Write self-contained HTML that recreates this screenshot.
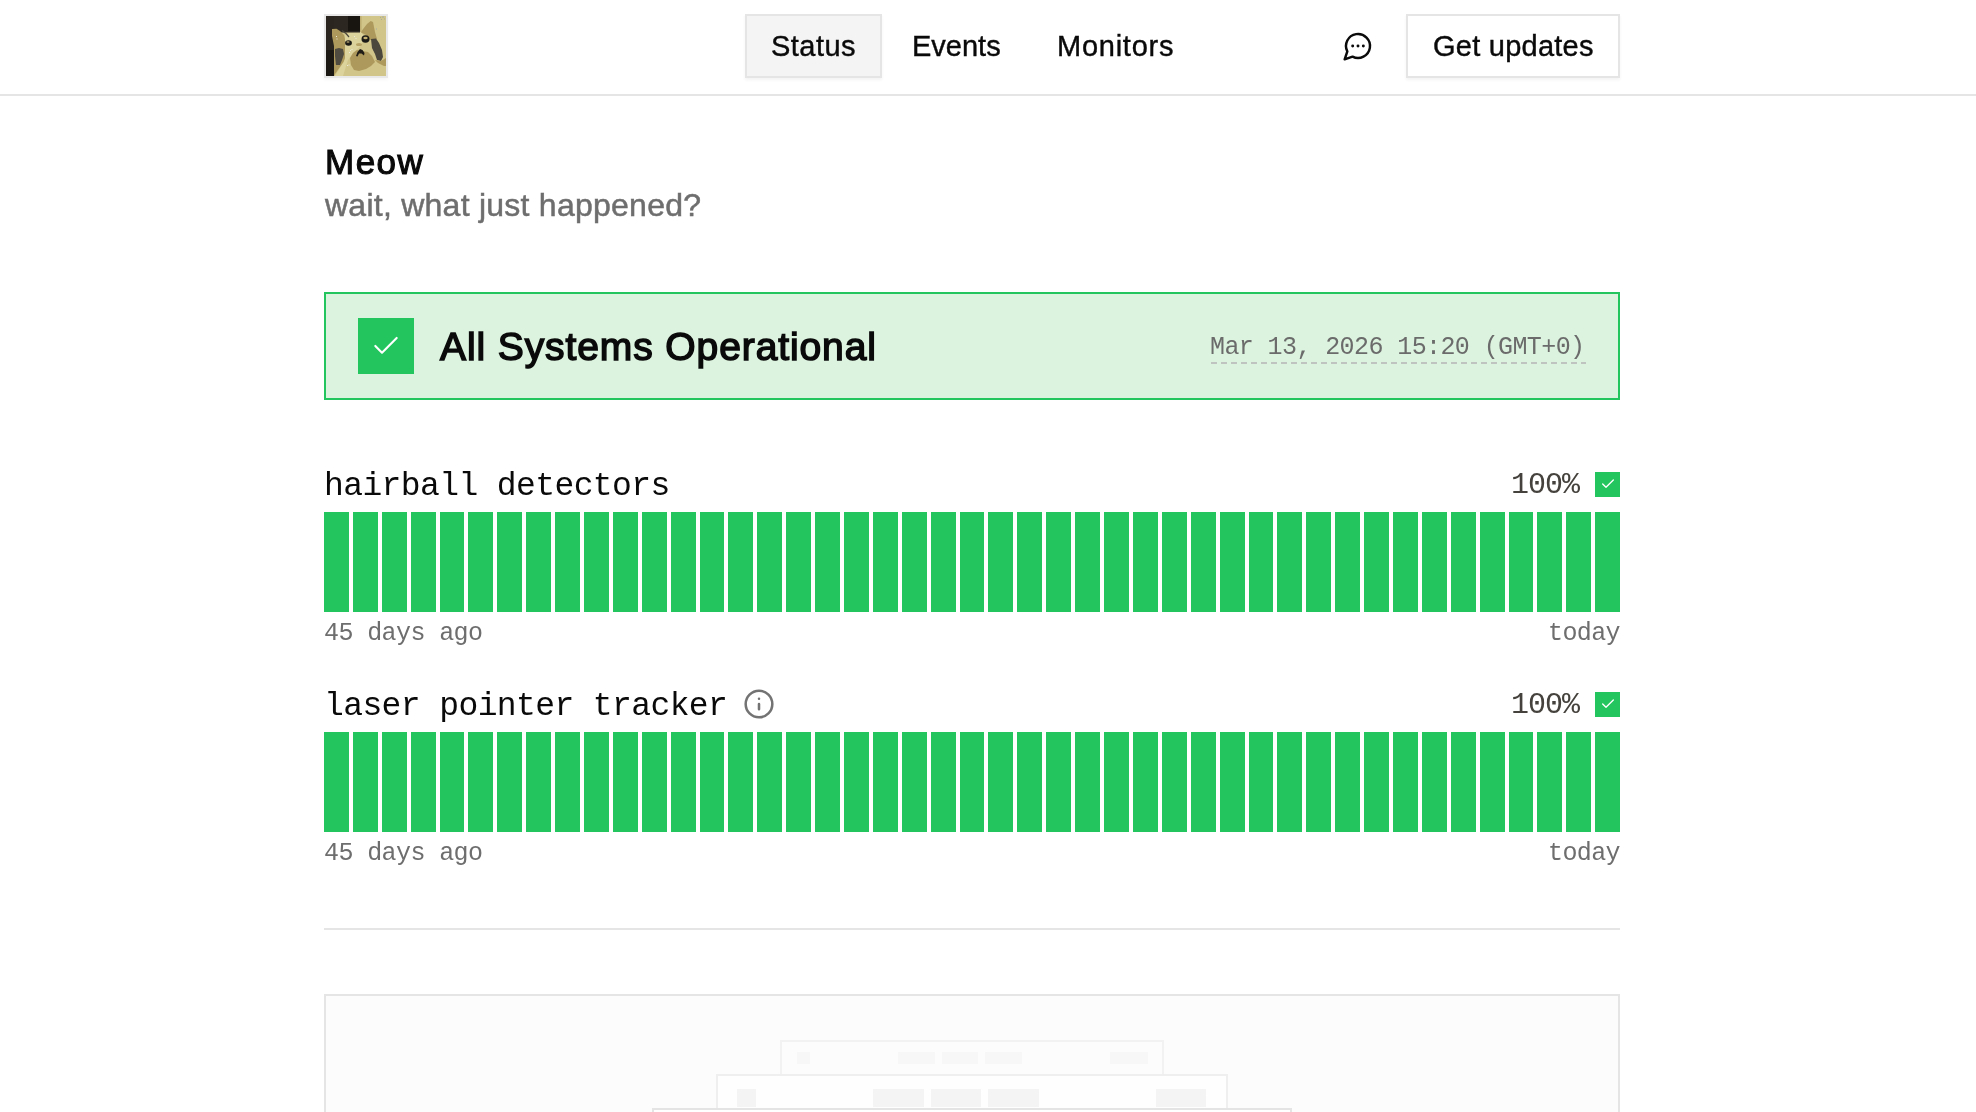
<!DOCTYPE html>
<html><head><meta charset="utf-8"><title>Meow</title>
<style>
html,body{margin:0;padding:0;}
body{-webkit-font-smoothing:antialiased;will-change:transform;width:1976px;height:1112px;overflow:hidden;position:relative;background:#fff;font-family:"Liberation Sans",sans-serif;color:#0a0a0a;}
.a{position:absolute;white-space:nowrap;}
.mono{font-family:"Liberation Mono",monospace;}
.t{line-height:1;}
#hdrline{left:0;top:94px;width:1976px;height:2px;background:#e5e5e5;}
#logo{left:324px;top:14px;width:64px;height:64px;box-sizing:border-box;border:2px solid #e8e8e8;box-shadow:0 2px 3px rgba(0,0,0,0.04);}
#logo svg{display:block;}
.btn{box-sizing:border-box;border:2px solid #e5e5e5;height:64px;top:14px;box-shadow:0 2px 3px rgba(0,0,0,0.05);}
#b-status{left:745px;width:137px;background:#f4f4f4;}
#b-upd{left:1406px;width:214px;background:#fff;}
.nav{font-size:29px;top:32px;-webkit-text-stroke:0.4px #0a0a0a;}
#banner{left:324px;top:292px;width:1296px;height:108px;box-sizing:border-box;border:2px solid #22c55e;background:#dcf4df;}
.sq{background:#22c55e;}
.bars{left:324px;width:1296px;height:100px;display:flex;gap:4px;}
.bars i{flex:1;background:#22c55e;display:block;}
.gray{color:#6e6e6e;}
.ph1{background:#f7f7f7;}
.ph2{background:#f4f4f4;}
</style></head><body>

<!-- header -->
<div class="a" id="logo">
<svg width="60" height="60" viewBox="0 0 60 60">
<rect width="60" height="60" fill="#d1c58a"/>
<polygon points="19,19 24,16.5 35,16 38,20 35,30 28,36 22,44 17,60 9,60 17.5,46 19,42" fill="#dcd29c"/>
<rect x="0" y="0" width="34" height="16.5" fill="#2c2720"/>
<rect x="22" y="0" width="12" height="15" fill="#181511"/>
<rect x="34" y="0" width="1.6" height="16" fill="#bfae72"/>
<rect x="0" y="0" width="8" height="60" fill="#2a251e"/>
<rect x="0" y="34" width="8" height="26" fill="#1b1814"/>
<polygon points="6,13 10.5,12.8 14,15 18,19 19,23 19,42 17.5,46 9,58 8,60 8,30 6,20" fill="#ad995b"/>
<polygon points="9,33 13,32 17,33 18,38 16,44 14,49 10,49 9,40" fill="#4f4b40"/>
<polyline points="16,14.5 20,17.5 23,21" fill="none" stroke="#4a463b" stroke-width="1.2"/>
<polygon points="35,16.5 36.7,13.5 41,8 44.7,5 47,6 49,16 51,23 48,24 44,24 40,19" fill="#ad995b"/>
<polygon points="45,23 50,22.5 53,27 56,34 57,41 55,45 51,44 49,38 46,32" fill="#4b473c"/>
<polygon points="27,37 31,34 36,35 42,36 46,40 49,46 45,50 40,53 33,55 28,54 25,49 24,42" fill="#ad995b"/>
<polygon points="49,44 55,45 60,42 60,50 58,50 52,47" fill="#ad995b"/>
<ellipse cx="33" cy="28.5" rx="3" ry="1.6" fill="#b7a365"/>
<ellipse cx="22.5" cy="27" rx="3.4" ry="2.8" fill="#1c1a16"/>
<ellipse cx="22" cy="26" rx="1.6" ry="0.9" fill="#8a7f5a"/>
<ellipse cx="39.5" cy="23" rx="4" ry="3.8" fill="#1c1a16"/>
<ellipse cx="39.5" cy="22" rx="2.2" ry="1.3" fill="#c4b070"/>
<polygon points="30,40 31.5,36 34,33 36.5,34 38.5,37 38,39.5 35.5,37.5 33,37.5 31.5,40.5" fill="#1f1c17"/>
<g fill="#eeeadb"><rect x="10" y="20" width="1" height="1"/><rect x="10.5" y="22.5" width="1" height="1"/><rect x="28" y="20" width="1" height="1"/><rect x="29.5" y="22" width="1" height="1"/><rect x="24" y="34" width="1" height="1"/><rect x="25.5" y="33" width="1" height="1"/><rect x="23" y="36" width="1" height="1"/><rect x="21" y="49" width="1" height="1"/><rect x="22.5" y="48.5" width="1" height="1"/></g>
<g fill="#a4a9a3"><rect x="54" y="1" width="1" height="1"/><rect x="56" y="0.5" width="2" height="1"/><rect x="55" y="3" width="1" height="1"/><rect x="58" y="2.5" width="1" height="1"/><rect x="50" y="12.5" width="1" height="1"/></g>
</svg>
</div>
<div class="a btn" id="b-status"></div>
<div class="a btn" id="b-upd"></div>
<div class="a t nav" id="t-status" style="left:771px;letter-spacing:0.45px;">Status</div>
<div class="a t nav" id="t-events" style="left:912px;">Events</div>
<div class="a t nav" id="t-monitors" style="left:1057px;letter-spacing:0.75px;">Monitors</div>
<svg class="a" style="left:1342px;top:30px;" width="32" height="32" viewBox="0 0 24 24" fill="none" stroke="#0a0a0a" stroke-width="1.85" stroke-linecap="round" stroke-linejoin="round"><path d="M7.9 20A9 9 0 1 0 4 16.1L2 22Z"/><path d="M8 12h.01M12 12h.01M16 12h.01" stroke-width="2.2"/></svg>
<div class="a t nav" id="t-upd" style="left:1433px;letter-spacing:0.25px;">Get updates</div>
<div class="a" id="hdrline"></div>

<!-- title -->
<div class="a t" id="t-meow" style="left:325px;top:144px;font-size:35px;letter-spacing:1.5px;-webkit-text-stroke:1.1px #0a0a0a;">Meow</div>
<div class="a t gray" id="t-sub" style="left:325px;top:189px;font-size:32px;letter-spacing:0.25px;-webkit-text-stroke:0.5px #6e6e6e;">wait, what just happened?</div>

<!-- banner -->
<div class="a" id="banner"></div>
<div class="a sq" style="left:358px;top:318px;width:56px;height:56px;"></div>
<svg class="a" style="left:370px;top:330px;" width="32" height="32" viewBox="0 0 24 24" fill="none" stroke="#fff" stroke-width="1.6" stroke-linecap="round" stroke-linejoin="round"><path d="M20 6 9 17l-5-5"/></svg>
<div class="a t" id="t-all" style="left:440px;top:327px;font-size:39px;letter-spacing:0.9px;-webkit-text-stroke:1.5px #0a0a0a;">All Systems Operational</div>
<div class="a t mono" id="t-date" style="left:1210px;top:335px;font-size:25px;letter-spacing:-0.6px;color:#6b6b6b;">Mar 13, 2026 15:20 (GMT+0)</div>
<div class="a" style="left:1211px;top:362px;width:375px;height:2px;background-image:linear-gradient(to right,#c0c4c0 0,#c0c4c0 6px,rgba(192,196,192,0) 6px);background-size:10px 2px;"></div>

<!-- monitor 1 -->
<div class="a t mono" id="t-m1" style="left:324px;top:470px;font-size:33px;letter-spacing:-0.6px;">hairball detectors</div>
<div class="a t mono" id="t-p1" style="left:1511px;top:470px;font-size:30px;letter-spacing:-1px;color:#45423d;">100%</div>
<div class="a sq" style="left:1595px;top:472px;width:25px;height:25px;"></div>
<svg class="a" style="left:1600px;top:476px;" width="16" height="16" viewBox="0 0 24 24" fill="none" stroke="#fff" stroke-width="2" stroke-linecap="round" stroke-linejoin="round"><path d="M20 6 9 17l-5-5"/></svg>
<div class="a bars" style="top:512px;"><i></i><i></i><i></i><i></i><i></i><i></i><i></i><i></i><i></i><i></i><i></i><i></i><i></i><i></i><i></i><i></i><i></i><i></i><i></i><i></i><i></i><i></i><i></i><i></i><i></i><i></i><i></i><i></i><i></i><i></i><i></i><i></i><i></i><i></i><i></i><i></i><i></i><i></i><i></i><i></i><i></i><i></i><i></i><i></i><i></i></div>
<div class="a t mono gray" id="t-l1" style="left:324px;top:621px;font-size:25px;letter-spacing:-0.6px;">45 days ago</div>
<div class="a t mono gray" id="t-r1" style="left:1548px;top:621px;font-size:25px;letter-spacing:-0.6px;">today</div>

<!-- monitor 2 -->
<div class="a t mono" id="t-m2" style="left:324px;top:690px;font-size:33px;letter-spacing:-0.6px;">laser pointer tracker</div>
<svg class="a" style="left:743px;top:688px;" width="32" height="32" viewBox="0 0 24 24" fill="none" stroke="#737373" stroke-width="1.9" stroke-linecap="round" stroke-linejoin="round"><circle cx="12" cy="12" r="10"/><path d="M12 16v-4M12 8h.01"/></svg>
<div class="a t mono" id="t-p2" style="left:1511px;top:690px;font-size:30px;letter-spacing:-1px;color:#45423d;">100%</div>
<div class="a sq" style="left:1595px;top:692px;width:25px;height:25px;"></div>
<svg class="a" style="left:1600px;top:696px;" width="16" height="16" viewBox="0 0 24 24" fill="none" stroke="#fff" stroke-width="2" stroke-linecap="round" stroke-linejoin="round"><path d="M20 6 9 17l-5-5"/></svg>
<div class="a bars" style="top:732px;"><i></i><i></i><i></i><i></i><i></i><i></i><i></i><i></i><i></i><i></i><i></i><i></i><i></i><i></i><i></i><i></i><i></i><i></i><i></i><i></i><i></i><i></i><i></i><i></i><i></i><i></i><i></i><i></i><i></i><i></i><i></i><i></i><i></i><i></i><i></i><i></i><i></i><i></i><i></i><i></i><i></i><i></i><i></i><i></i><i></i></div>
<div class="a t mono gray" id="t-l2" style="left:324px;top:841px;font-size:25px;letter-spacing:-0.6px;">45 days ago</div>
<div class="a t mono gray" id="t-r2" style="left:1548px;top:841px;font-size:25px;letter-spacing:-0.6px;">today</div>

<!-- hr -->
<div class="a" style="left:324px;top:928px;width:1296px;height:2px;background:#e5e5e5;"></div>

<!-- bottom box -->
<div class="a" id="bbox" style="left:324px;top:994px;width:1296px;height:200px;box-sizing:border-box;border:2px solid #e5e5e5;background:#fcfcfc;"></div>
<div class="a" style="left:780px;top:1040px;width:384px;height:40px;box-sizing:border-box;border:2px solid #f2f2f2;background:#fcfcfc;"></div>
<div class="a ph1" style="left:797px;top:1052px;width:13px;height:12px;"></div>
<div class="a ph1" style="left:898px;top:1052px;width:37px;height:12px;"></div>
<div class="a ph1" style="left:942px;top:1052px;width:36px;height:12px;"></div>
<div class="a ph1" style="left:985px;top:1052px;width:37px;height:12px;"></div>
<div class="a ph1" style="left:1110px;top:1052px;width:38px;height:12px;"></div>
<div class="a" style="left:716px;top:1074px;width:512px;height:60px;box-sizing:border-box;border:2px solid #efefef;background:#fefefe;"></div>
<div class="a ph2" style="left:737px;top:1089px;width:19px;height:18px;"></div>
<div class="a ph2" style="left:873px;top:1089px;width:51px;height:18px;"></div>
<div class="a ph2" style="left:931px;top:1089px;width:50px;height:18px;"></div>
<div class="a ph2" style="left:988px;top:1089px;width:51px;height:18px;"></div>
<div class="a ph2" style="left:1156px;top:1089px;width:50px;height:18px;"></div>
<div class="a" style="left:652px;top:1108px;width:640px;height:60px;box-sizing:border-box;border:2px solid #e4e4e4;background:#fff;"></div>
</body></html>
